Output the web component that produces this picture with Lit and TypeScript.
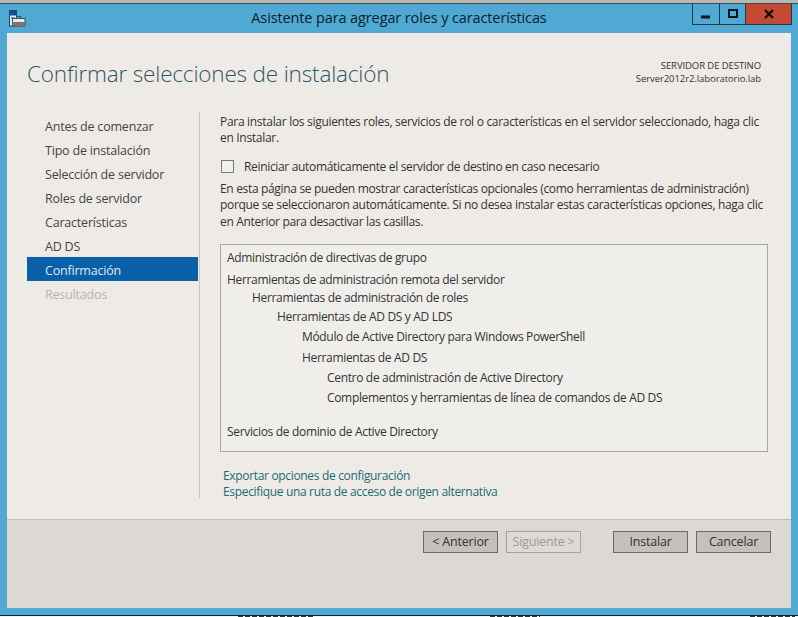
import { LitElement, html, css } from "lit";
import { customElement } from "lit/decorators.js";

const NAV = ["Antes de comenzar", "Tipo de instalación", "Selección de servidor", "Roles de servidor", "Características", "AD DS", "Confirmación", "Resultados"];
const TREE: [string, number, number][] = [
  ["Administración de directivas de grupo", 0, 23],
  ["Herramientas de administración remota del servidor", 0, 18],
  ["Herramientas de administración de roles", 1, 19],
  ["Herramientas de AD DS y AD LDS", 2, 20],
  ["Módulo de Active Directory para Windows PowerShell", 3, 21],
  ["Herramientas de AD DS", 3, 20],
  ["Centro de administración de Active Directory", 4, 20],
  ["Complementos y herramientas de línea de comandos de AD DS", 4, 34],
  ["Servicios de dominio de Active Directory", 0, 19],
];

@customElement("app-root")
export class AppRoot extends LitElement {
  static styles = css`
    :host { display: block; width: 798px; height: 617px; overflow: hidden; background: #b9b9b4; font-family: "Open Sans", "Noto Sans", sans-serif; font-size: 12px; color: #333; letter-spacing: -0.33px; }
    .window { margin-top: 3px; height: 612px; background: #4fa9d3; border-top: 1px solid #3a4a55; box-sizing: border-box; display: flex; flex-direction: column; }
    .titlebar { height: 29px; flex: none; display: grid; grid-template-columns: 1fr auto 1fr; align-items: start; }
    .appicon { margin: 6px 0 0 9px; display: block; }
    .title { font-size: 14.5px; color: #10202a; line-height: 28px; letter-spacing: -0.12px; }
    .controls { justify-self: end; display: flex; margin-right: 6px; border: 1px solid #1d3a4c; border-top: none; height: 20px; }
    .ctl { width: 27px; box-sizing: border-box; display: flex; align-items: center; justify-content: center; border-right: 1px solid #1d3a4c; }
    .ctl.max { width: 26px; }
    .ctl.close { width: 45px; background: #c44b33; border-right: none; }
    .client { flex: 1; margin: 0 7px 7px 7px; background: #eeebe7; display: flex; flex-direction: column; min-height: 0; }
    .head { height: 79px; flex: none; display: flex; justify-content: space-between; padding: 0 30px 0 20px; }
    h1 { margin: 23px 0 0; font-weight: 300; font-size: 22.5px; line-height: 36px; color: #2f5666; letter-spacing: -0.17px; }
    .dest { margin-top: 26px; text-align: right; font-size: 9.5px; line-height: 13px; color: #333; letter-spacing: -0.08px; }
    .main { flex: 1; display: flex; min-height: 0; }
    .nav { width: 171px; margin-left: 20px; padding-top: 1px; flex: none; font-size: 12.5px; letter-spacing: -0.2px; }
    .nav div { height: 24px; line-height: 27px; padding-left: 18px; color: #444; }
    .nav .sel { background: #0a60a8; color: #dfe9f2; }
    .nav .dis { color: #b5b3b0; }
    .content { flex: 1; margin-left: 1px; border-left: 1px solid #c9c6c2; padding: 2px 23px 0 20px; height: 386px; box-sizing: border-box; }
    .para { margin: 0; line-height: 16px; color: #333; }
    .p1 { letter-spacing: -0.3px; }
    .check { display: flex; align-items: center; margin-top: 11px; height: 18px; }
    .box { width: 11px; height: 11px; border: 1px solid #777; background: #f2f0ed; margin: 0 10px 0 1px; }
    .p2 { margin-top: 5.5px; line-height: 16.5px; white-space: nowrap; }
    .tree { margin-top: 13.5px; height: 208px; box-sizing: border-box; border: 1px solid #a9a7a4; background: #f0eeeb; padding: 3px 0 0 6px; line-height: 19px; }
    .tree div { white-space: nowrap; }
    .links { margin-top: 16px; margin-left: 3px; line-height: 16px; color: #1b6a78; }
    .footer { height: 89px; flex: none; background: #dcd8d3; border-top: 1px solid #c4beb9; box-sizing: border-box; display: flex; padding: 11px 20px 0 0; justify-content: flex-end; font-size: 12.5px; letter-spacing: -0.2px; }
    .btn { width: 75px; height: 22px; box-sizing: border-box; border: 1px solid #6d6a66; background: #c5c0bb; text-align: center; line-height: 20px; color: #333; margin-left: 8px; }
    .btn.off { border-color: #a5a29e; background: #dedad6; color: #9b9995; }
    .btn.first { margin-left: 0; }
    .btn.go { margin-left: 32px; }
    .under { height: 2px; box-sizing: border-box; border-top: 1px solid #16222b; background: #eef3f6; display: flex; }
    .under span { height: 1px; background: repeating-linear-gradient(90deg, #333 0 5px, #eef3f6 5px 7px); }
    .u1 { width: 77px; margin-left: 238px; }
    .u2 { width: 50px; margin-left: 175px; }
    .u3 { width: 45px; margin-left: 210px; }
  `;

  render() {
    return html`
      <div class="window">
        <div class="titlebar">
          <svg class="appicon" width="17" height="17" viewBox="0 0 17 17">
            <rect x="0.5" y="0.5" width="7" height="15.5" fill="#dff0fa" stroke="#12447f"/>
            <rect x="0.5" y="0.5" width="7" height="5" fill="#12509a"/>
            <path d="M2 8h4" stroke="#12447f"/>
            <rect x="3.5" y="8.5" width="12.5" height="7.5" fill="#e6edf0" stroke="#33505f"/>
            <rect x="3.5" y="12" width="12.5" height="4" fill="#7d7468"/>
            <path d="M7.5 8.5V6.5h4.5v2" fill="none" stroke="#33505f"/>
          </svg>
          <div class="title">Asistente para agregar roles y características</div>
          <div class="controls">
            <div class="ctl"><svg width="10" height="10" viewBox="0 0 10 10"><rect x="0" y="6.5" width="9" height="3" fill="#0c1418"/></svg></div>
            <div class="ctl max"><svg width="10" height="10" viewBox="0 0 10 10"><rect x="1" y="1" width="8" height="7" fill="none" stroke="#0c1418" stroke-width="2"/></svg></div>
            <div class="ctl close"><svg width="10" height="10" viewBox="0 0 10 10"><path d="M1 1l8 8M9 1l-8 8" stroke="#1a0d0a" stroke-width="2.4"/></svg></div>
          </div>
        </div>
        <div class="client">
          <div class="head">
            <h1>Confirmar selecciones de instalación</h1>
            <div class="dest">SERVIDOR DE DESTINO<br />Server2012r2.laboratorio.lab</div>
          </div>
          <div class="main">
            <div class="nav">
              ${NAV.map((n, i) => html`<div class=${i === 6 ? "sel" : i === 7 ? "dis" : ""}>${n}</div>`)}
            </div>
            <div class="content">
              <p class="para p1">Para instalar los siguientes roles, servicios de rol o características en el servidor seleccionado, haga clic en Instalar.</p>
              <div class="check"><span class="box"></span><span>Reiniciar automáticamente el servidor de destino en caso necesario</span></div>
              <p class="para p2">En esta página se pueden mostrar características opcionales (como herramientas de administración)<br />porque se seleccionaron automáticamente. Si no desea instalar estas características opciones, haga clic<br />en Anterior para desactivar las casillas.</p>
              <div class="tree">
                ${TREE.map(([t, lvl, h], i) => html`<div style="padding-left:${lvl * 25}px;height:${i === 0 ? h - 1 : h}px">${t}</div>`)}
              </div>
              <div class="links">Exportar opciones de configuración<br />Especifique una ruta de acceso de origen alternativa</div>
            </div>
          </div>
          <div class="footer">
            <div class="btn first">&lt; Anterior</div>
            <div class="btn off">Siguiente &gt;</div>
            <div class="btn go">Instalar</div>
            <div class="btn">Cancelar</div>
          </div>
        </div>
      </div>
      <div class="under"><span class="u1"></span><span class="u2"></span><span class="u3"></span></div>
    `;
  }
}
